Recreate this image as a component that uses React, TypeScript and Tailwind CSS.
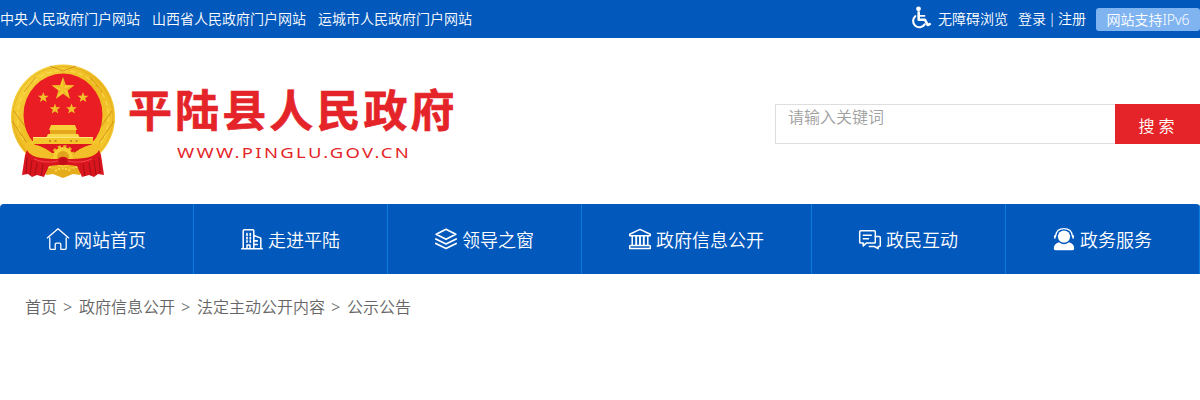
import type { ReactNode } from "react";

const portals = ["中央人民政府门户网站", "山西省人民政府门户网站", "运城市人民政府门户网站"];
const crumbs = ["首页", "政府信息公开", "法定主动公开内容", "公示公告"];

function Icon({ children }: { children: ReactNode }) {
  return (
    <svg
      viewBox="0 0 24 24"
      className="w-6 h-6 shrink-0"
      fill="none"
      stroke="currentColor"
      strokeWidth="1.4"
      strokeLinecap="round"
      strokeLinejoin="round"
    >
      {children}
    </svg>
  );
}

const navItems: { label: string; width: string; icon: ReactNode }[] = [
  {
    label: "网站首页",
    width: "w-[194px]",
    icon: <path d="M1.3 10.9 12 1.8l10.7 9.1M3.8 10.8v10.5q0 1 1 1h4.4v-5q0-1.2 1.2-1.2h3.2q1.2 0 1.2 1.2v5h4.4q1 0 1-1V10.8" strokeWidth="1.3" />,
  },
  {
    label: "走进平陆",
    width: "w-[194px]",
    icon: (
      <>
        <path d="M1.7 21.8h20.6M3.2 21.8V3.7q0-1 1-1h8.6q1 0 1 1v18.1M13.8 8.5l7 2.6v10.7M7 21.5V18h3v3.5" strokeWidth="1.5" />
        <path d="M7 6.7v1.5M10.3 6.7v1.5M7 10.3v1.5M10.3 10.3v1.5M7 13.9v1.2M10.3 13.9v1.2M14.5 13.9h2.7M14.5 17.5h2.7" strokeWidth="1.7" />
      </>
    ),
  },
  {
    label: "领导之窗",
    width: "w-[194px]",
    icon: (
      <path d="M12 2.3 21.8 7.3 12 12.3 2.2 7.3ZM1.8 12l10.2 5 10.2-5M1.8 16.5l10.2 5 10.2-5" strokeWidth="1.7" />
    ),
  },
  {
    label: "政府信息公开",
    width: "w-[230px]",
    icon: (
      <>
        <path d="M1.7 8.8V7.3L12 2.4l10.3 4.9v1.5ZM4.2 9v9M19.8 9v9M1.7 21.5v-2.2q0-.9.9-.9h18.8q.9 0 .9.9v2.2Z" strokeWidth="1.5" />
        <path d="M8.2 9v9M12 9v9M15.8 9v9" strokeWidth="1.9" />
      </>
    ),
  },
  {
    label: "政民互动",
    width: "w-[194px]",
    icon: (
      <>
        <path d="M2.6 3.8h13.8q.9 0 .9.9v10.5q0 .9-.9.9H8.3l-3.1 2.8v-2.8H2.6q-.9 0-.9-.9V4.7q0-.9.9-.9ZM5.3 8.2h8M5.3 11.7h5.2" strokeWidth="1.5" />
        <path d="M17.3 9.5h4q1 0 1 1v8q0 1-1 1h-1.2v2.2l-3.6-2.2h-5.2" strokeWidth="1.5" />
      </>
    ),
  },
  {
    label: "政务服务",
    width: "w-[194px]",
    icon: (
      <>
        <circle cx="12" cy="9.6" r="6.1" fill="currentColor" stroke="none" />
        <path d="M3.6 9.3C4 4 7.2 1.6 12 1.6s8 2.4 8.4 7.7" strokeWidth="1.3" />
        <path d="M2.9 8.8v2M21.1 8.8v2" strokeWidth="1.7" />
        <path d="M7 15.3q5 4 10 0 5.2 1.4 5.2 6.2 0 1.8-1.8 1.8H3.6Q1.8 23.3 1.8 21.5q0-4.8 5.2-6.2Z" fill="currentColor" stroke="none" />
      </>
    ),
  },
];

function Star({ x, y, r }: { x: number; y: number; r: number }) {
  return (
    <g transform={`translate(${x} ${y}) scale(${r})`}>
      <path
        d="M0-1 .235-.324.951-.309.380.124.588.809 0 .4-.588.809-.380.124-.951-.309-.235-.324Z"
        fill="#f8cc2e"
      />
      <path d="M0-1V0L.235-.324ZM.951-.309 0 0 .380.124ZM.588.809 0 0V.4ZM-.588.809 0 0-.380.124ZM-.951-.309 0 0-.235-.324Z" fill="#d58b16" fillOpacity=".3" />
    </g>
  );
}

function Emblem() {
  return (
    <svg viewBox="0 0 106 116" className="w-[106px] h-[116px] shrink-0">
      <defs>
        <linearGradient id="gold" x1="0" y1="0" x2="1" y2="1">
          <stop offset="0" stopColor="#f9d840" />
          <stop offset=".5" stopColor="#eeb91f" />
          <stop offset="1" stopColor="#f7cf35" />
        </linearGradient>
      </defs>
      <ellipse cx="53" cy="53" rx="52" ry="52.5" fill="url(#gold)" />
      <ellipse cx="53" cy="53" rx="50" ry="50.5" fill="none" stroke="#d49b1a" strokeWidth=".7" strokeOpacity=".7" />
      <ellipse cx="53" cy="53" rx="45.5" ry="46.5" fill="none" stroke="#ffe768" strokeWidth="1.5" strokeDasharray="5 3" strokeOpacity=".5" />
      <path d="M14 28 26 13M80 13l12 15M40 2l13 5 13-5M2 57l15 22M104 57 89 79M4 47l12 17M102 47 90 64" fill="none" stroke="#c58213" strokeWidth="1" strokeOpacity=".7" />
      <ellipse cx="53" cy="51" rx="39.5" ry="41.5" fill="#ea1d24" />
      <Star x={53} y={25} r={12} />
      <Star x={33.3} y={33.5} r={5.6} />
      <Star x={73} y={33.5} r={5.6} />
      <Star x={45} y={45} r={5.6} />
      <Star x={61.5} y={45} r={5.6} />
      {/* gate tower */}
      <path d="M41 61h24l2 5H39Z" fill="#f8d039" />
      <path d="M40 66h26v4H40Z" fill="#e6a91d" />
      <path d="M38 70h30l2 4H36Z" fill="#f9d84a" />
      <path d="M23 73h60v4l8 2v6H15v-6l8-2Z" fill="#f5c62c" />
      <path d="M23 73.5h60" stroke="#ffe77a" strokeWidth="1" />
      <path d="M39 77h2M44.5 77h2M60 77h2M65.5 77h2" stroke="#b8761a" strokeWidth="1.3" />
      <path d="M24 80h58L70 94H36Z" fill="#df171f" />
      {/* wheat stalks and gear */}
      <path d="M15 79q16 1 27 10h22q11-9 27-10l-2 11-18 8H35l-18-8Z" fill="#f3bf28" />
      <path d="M24 80h58q-9 2-16 7H40q-7-5-16-7Z" fill="#df171f" />
      <circle cx="53" cy="93" r="10.5" fill="none" stroke="#eab524" strokeWidth="3" strokeDasharray="3 2.5" />
      <circle cx="53" cy="93" r="10" fill="#f8ce35" />
      <circle cx="53" cy="93" r="6" fill="#e0a11c" />
      {/* ribbon */}
      <path d="M33 103c12 2 28 2 40 0l-3 8-7-1-10 4-10-4-7 1Z" fill="#e5ac1c" />
      <path d="M45 107q8-5 16 0" fill="none" stroke="#f9d84a" strokeWidth="2" strokeDasharray="2 1.5" />
      <path d="M17 86c3 7 14 9 31 9 2-3 8-3 10 0 17 0 28-2 31-9l2 5 3 20-6-1-4 3-5-2-7 2-5-11-9-1H48l-9 1-5 11-7-2-5 2-4-3-6 1 3-20Z" fill="#d9161e" />
      <path d="M17 93l-1 16M22 96l-2 15M27 99l-2 12M33 100l-2 12M89 93l1 16M84 96l2 15M79 99l2 12M73 100l2 12" stroke="#8f0b15" strokeWidth="1" strokeOpacity=".7" />
      <path d="M24 95q12 5 24 2M82 95q-12 5-24 2" fill="none" stroke="#f4454a" strokeWidth="1" />
      <ellipse cx="53" cy="97.5" rx="4.5" ry="3.8" fill="#c40f19" />
    </svg>
  );
}

function TopBar() {
  return (
    <div className="h-[38px] bg-[#0358bc] flex items-center justify-between text-white text-sm leading-[38px] whitespace-nowrap">
      <div className="flex gap-3">
        {portals.map((p) => (
          <a key={p}>{p}</a>
        ))}
      </div>
      <div className="flex items-center">
        <svg viewBox="0 0 20 24" className="w-5 h-6 mr-[7px] -mt-1" fill="none" stroke="white" strokeLinecap="round" strokeLinejoin="round">
          <circle cx="7.5" cy="3.8" r="2.4" fill="white" stroke="none" />
          <path d="M7.7 7.4v7.4H14l2.7 5.2 2-.9" strokeWidth="2.6" />
          <path d="M8 10.8h5.5" strokeWidth="1.8" />
          <path d="M4.3 11.2a6.3 6.3 0 1 0 9.4 8.2" strokeWidth="2.1" />
        </svg>
        <a className="mr-[10px]">无障碍浏览</a>
        <span className="mr-[10px] [word-spacing:-1.5px]">登录 | 注册</span>
        <span className="h-[23px] w-[104px] text-center leading-[23px] bg-[#7fb4f1] rounded-[3px]">
          网站支持IPv6
        </span>
      </div>
    </div>
  );
}

export default function App() {
  return (
    <div className="w-[1200px] h-[400px] overflow-hidden bg-white font-[350] font-['Noto_Sans','Noto_Sans_CJK_SC',sans-serif]">
      <TopBar />

      {/* Logo and search */}
      <header className="h-[166px] flex justify-between">
        <div className="flex pl-[10px] pt-[26px] text-[#e42428]">
          <Emblem />
          <div className="pl-3 pt-[15px] whitespace-nowrap">
            <h1 className="text-[44px] leading-[62px] font-bold tracking-[3.1px] [-webkit-text-stroke:0.6px_#e42428]">
              平陆县人民政府
            </h1>
            <p className="ml-[49px] pt-px text-[15px] leading-5 tracking-[1.9px] font-normal origin-left scale-x-[1.23]">
              WWW.PINGLU.GOV.CN
            </p>
          </div>
        </div>
        <form className="flex h-10 mt-[66px]">
          <input
            type="text"
            placeholder="请输入关键词"
            className="w-[340px] h-10 border border-r-0 border-[#dedede] pl-3 pb-[14px] text-base leading-6 outline-none placeholder:text-[#a0a0a0]"
          />
          <button type="button" className="w-[85px] h-10 bg-[#e42428] text-white text-base pt-1 pr-[2px]">
            搜 索
          </button>
        </form>
      </header>

      <nav className="h-[70px] bg-[#0358bc] rounded-t-[4px] overflow-hidden flex text-white text-lg whitespace-nowrap">
        {navItems.map((item) => (
          <a
            key={item.label}
            className={`${item.width} flex items-center justify-center gap-1 border-r border-[#087ddd] pr-px`}
          >
            <Icon>{item.icon}</Icon>
            <span className="pt-px">{item.label}</span>
          </a>
        ))}
      </nav>

      <div className="flex pl-[25px] pt-[21px] text-base leading-6 text-[#666] whitespace-nowrap">
        {crumbs.map((c, i) => (
          <div key={c} className="flex">
            {i > 0 && <span className="w-[22px] pl-[6px]">&gt;</span>}
            <a>{c}</a>
          </div>
        ))}
      </div>
    </div>
  );
}
